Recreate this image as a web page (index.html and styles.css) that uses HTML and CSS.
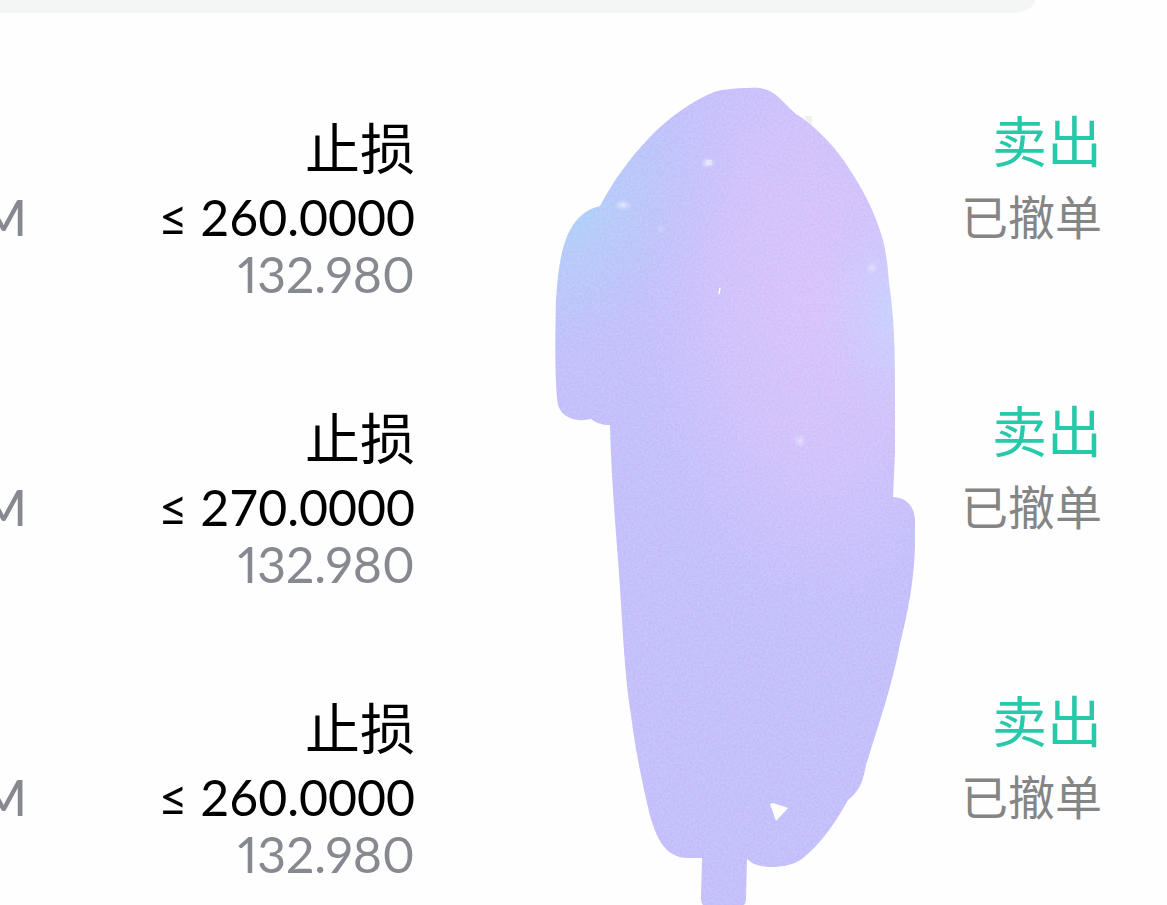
FILE: index.html
```html
<!DOCTYPE html>
<html lang="zh-CN">
<head>
<meta charset="utf-8">
<meta name="viewport" content="width=device-width, initial-scale=1">
<title>止损</title>
<link rel="stylesheet" href="styles.css">
</head>
<body>
<main class="page">
  <div class="banner"></div>
  <ul class="orders">
    <li class="order">
      <span class="symbol">M</span>
      <div class="trigger">
        <span class="kind">止损</span>
        <span class="price">≤ 260.0000</span>
        <span class="amount">132.980</span>
      </div>
      <div class="status">
        <span class="side">卖出</span>
        <span class="state">已撤单</span>
      </div>
    </li>
    <li class="order">
      <span class="symbol">M</span>
      <div class="trigger">
        <span class="kind">止损</span>
        <span class="price">≤ 270.0000</span>
        <span class="amount">132.980</span>
      </div>
      <div class="status">
        <span class="side">卖出</span>
        <span class="state">已撤单</span>
      </div>
    </li>
    <li class="order">
      <span class="symbol">M</span>
      <div class="trigger">
        <span class="kind">止损</span>
        <span class="price">≤ 260.0000</span>
        <span class="amount">132.980</span>
      </div>
      <div class="status">
        <span class="side">卖出</span>
        <span class="state">已撤单</span>
      </div>
    </li>
  </ul>
  <svg class="brush" viewBox="0 0 1167 905" aria-hidden="true">
    <defs>
      <radialGradient id="blue" gradientUnits="userSpaceOnUse" cx="0" cy="0" r="1" gradientTransform="translate(580 220) rotate(-55) scale(200 130)">
        <stop offset="0" stop-color="#b3d0f9"/>
        <stop offset=".4" stop-color="#b8cbfa" stop-opacity=".65"/>
        <stop offset="1" stop-color="#c1c4fb" stop-opacity="0"/>
      </radialGradient>
      <radialGradient id="pink" gradientUnits="userSpaceOnUse" cx="0" cy="0" r="1" gradientTransform="translate(815 300) rotate(88) scale(350 190)">
        <stop offset="0" stop-color="#d9c5fb"/>
        <stop offset=".5" stop-color="#d6c4fc" stop-opacity=".75"/>
        <stop offset="1" stop-color="#cbc1fd" stop-opacity="0"/>
      </radialGradient>
      <radialGradient id="edge" gradientUnits="userSpaceOnUse" cx="0" cy="0" r="1" gradientTransform="translate(900 310) scale(80 120)">
        <stop offset="0" stop-color="#c8d4fd"/>
        <stop offset="1" stop-color="#cfccfd" stop-opacity="0"/>
      </radialGradient>
      <radialGradient id="glow">
        <stop offset="0" stop-color="#f2f4ff" stop-opacity=".8"/>
        <stop offset="1" stop-color="#dfe2fc" stop-opacity="0"/>
      </radialGradient>
      <filter id="grain" x="0" y="0" width="1" height="1" color-interpolation-filters="sRGB">
        <feTurbulence type="fractalNoise" baseFrequency=".45" numOctaves="2" seed="4"/>
        <feColorMatrix values="1 0 0 0 0  0 1 0 0 0  0 0 1 0 0  0 0 0 0 .22"/>
      </filter>
      <clipPath id="shape">
        <path d="M600 206C613 181 630 158 649 138C667 119 690 102 714 92C724 89 737 88 749 88C760 87 768 89 776 95C784 102 789 108 796 114C808 121 824 136 835 149C858 178 875 211 883 240C887 256 888 270 889 283C894 315 895 349 895 386V452L893 497C907 498 914 506 915 520V547C914 580 908 612 900 644C893 682 878 727 866 765C863 779 862 789 848 800C836 822 820 845 802 859C792 866 779 867 770 867C760 867 752 864 747 859L746 899Q746 903 744 905H703Q701 903 701 899L702 858H690C666 859 656 839 649 812C644 789 636 756 631 715C624 674 622 610 618 560C615 520 611 471 610 425Q598 425 591 419C575 423 557 417 557 397C555 376 555 336 556 300C559 250 567 214 600 206Z"/>
      </clipPath>
    </defs>
    <path d="M804 116H812V130Z" fill="#f2eff0"/>
    <g clip-path="url(#shape)">
      <path fill="#c5c1fb" d="M550 80H920V905H550Z"/>
      <path fill="url(#pink)" d="M550 80H920V905H550Z"/>
      <path fill="url(#blue)" d="M550 80H920V905H550Z"/>
      <path fill="url(#edge)" d="M550 80H920V905H550Z"/>
      <path class="grain" filter="url(#grain)" d="M550 80H920V905H550Z"/>
      <ellipse cx="623" cy="205" rx="9" ry="6" fill="url(#glow)"/>
      <ellipse cx="708" cy="163" rx="8" ry="6" fill="url(#glow)"/>
      <ellipse cx="661" cy="229" rx="5" ry="6" fill="url(#glow)" opacity=".4"/>
      <ellipse cx="872" cy="268" rx="7" ry="7" fill="url(#glow)" opacity=".7"/>
      <ellipse cx="800" cy="441" rx="7" ry="7" fill="url(#glow)" opacity=".7"/>
      <path d="M706 161H712M706 164H712" stroke="#f3f0ff"/>
      <path d="M720 288L719 294" stroke="#fff" stroke-width="1.5"/>
      <path d="M770 804L773 803L788 808L776 821Z" fill="#fff"/>
    </g>
  </svg>
</main>
</body>
</html>
```
FILE: styles.css
```css
* {
  box-sizing: border-box;
}

body {
  margin: 0;
  background: #fefefe;
  color: #000;
  font-family: Lato, "Noto Sans CJK SC", sans-serif;
}

.page {
  position: relative;
  min-height: 100vh;
  overflow: hidden;
}

.banner {
  height: 13px;
  margin-right: 132px;
  background: #f4f6f5;
  border-radius: 0 0 24px 0 / 0 0 13px 0;
}

.orders {
  margin: 0;
  padding: 97px 65px 0 0;
  list-style: none;
}

.order {
  display: grid;
  grid-template-columns: 27fr 388fr 687fr;
  height: 290px;
}

.order:last-child {
  height: auto;
}

.symbol,
.trigger,
.status {
  display: flex;
  flex-direction: column;
  align-items: flex-end;
  min-width: 0;
  white-space: nowrap;
}

.symbol {
  padding-top: 79px;
  color: #868a90;
  font-size: 50px;
  font-weight: 500;
  line-height: 57px;
}

.kind,
.side {
  margin-bottom: 2px;
  font-size: 55px;
  line-height: 77px;
}

.price,
.amount {
  font-size: 50px;
  line-height: 57px;
}

.amount {
  color: #868a90;
  font-variant-numeric: proportional-nums;
}

.side {
  color: #27c9ab;
  line-height: 63px;
}

.state {
  color: #858585;
  font-size: 47px;
  line-height: 84px;
}

.brush {
  position: absolute;
  top: 0;
  left: 0;
  width: 100%;
  pointer-events: none;
}

.grain {
  mix-blend-mode: overlay;
}
```
